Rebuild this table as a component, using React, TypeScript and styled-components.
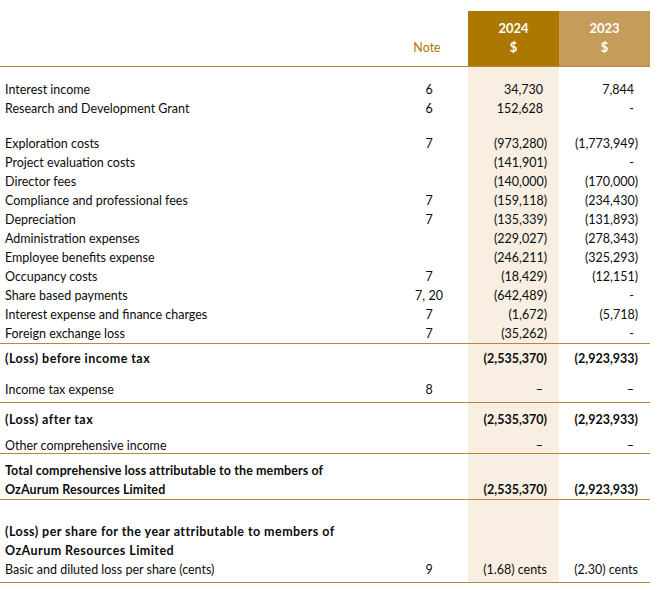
import React from "react";
import styled, { createGlobalStyle, css } from "styled-components";

const GOLD_DARK = "#AD7800";
const GOLD_LIGHT = "#C69C5B";
const RULE = "#B48A33";
const BEIGE = "#F8EEE1";
const INK = "#0c0c0c";

const Global = createGlobalStyle`
  html, body { margin: 0; padding: 0; background: #fff; }
  body {
    font-family: Lato, "Open Sans", "Liberation Sans", sans-serif;
    color: ${INK};
  }
`;

const Page = styled.div`
  width: 650px;
  padding-top: 11px;
  font-size: 12.5px;
`;

const columns = css`
  display: grid;
  grid-template-columns: 390px 78px 91px 91px;
`;

const HeaderRow = styled.div`
  ${columns};
  border-bottom: 1px solid ${RULE};
`;

const NoteHead = styled.div`
  align-self: end;
  text-align: center;
  color: ${GOLD_DARK};
  line-height: 19px;
  padding: 0 0 9px 0;
  margin-left: -4px;
`;

const YearHead = styled.div<{ $tone: "dark" | "light" }>`
  background: ${(p) => (p.$tone === "dark" ? GOLD_DARK : GOLD_LIGHT)};
  color: #fff;
  font-weight: 700;
  text-align: center;
  line-height: 19px;
  padding: 8px 0 9px;
  font-size: 13px;
`;

const Row = styled.div<{ $pt?: number; $pb?: number; $lh?: number; $rule?: boolean; $bold?: boolean }>`
  ${columns};
  line-height: ${(p) => p.$lh ?? 19}px;
  font-weight: ${(p) => (p.$bold ? 700 : 400)};
  border-bottom: ${(p) => (p.$rule ? `1px solid ${RULE}` : "none")};
  & > * {
    padding-top: ${(p) => p.$pt ?? 0}px;
    padding-bottom: ${(p) => p.$pb ?? 0}px;
  }
`;

const Spacer = styled.div<{ $h: number }>`
  ${columns};
  height: ${(p) => p.$h}px;
`;

const Label = styled.div<{ $spacing?: number }>`
  padding-left: 5px;
  white-space: nowrap;
  letter-spacing: ${(p) => p.$spacing ?? 0}px;
`;

const Note = styled.div`
  text-align: center;
`;

const Amount = styled.div<{ $current?: boolean }>`
  background: ${(p) => (p.$current ? BEIGE : "transparent")};
  display: flex;
  align-items: flex-end;
  justify-content: flex-end;
  padding-right: 12px;
  white-space: nowrap;
`;

const Val = styled.span<{ $pad?: boolean }>`
  padding-right: ${(p) => (p.$pad ? 4 : 0)}px;
`;

type Line = {
  label: React.ReactNode;
  note?: string;
  cur?: string;
  prev?: string;
};

const fmt = (v?: string) => {
  if (v === undefined) return null;
  const pad = !v.startsWith("(");
  return <Val $pad={pad}>{v}</Val>;
};

const Cells = ({ label, note, cur, prev, spacing }: Line & { spacing?: number }) => (
  <>
    <Label $spacing={spacing}>{label}</Label>
    <Note>{note}</Note>
    <Amount $current>{fmt(cur)}</Amount>
    <Amount>{fmt(prev)}</Amount>
  </>
);

const Gap = ({ h }: { h: number }) => (
  <Spacer $h={h}>
    <span />
    <span />
    <Amount $current />
    <span />
  </Spacer>
);

const income: Line[] = [
  { label: "Interest income", note: "6", cur: "34,730", prev: "7,844" },
  { label: "Research and Development Grant", note: "6", cur: "152,628", prev: "-" },
];

const expenses: Line[] = [
  { label: "Exploration costs", note: "7", cur: "(973,280)", prev: "(1,773,949)" },
  { label: "Project evaluation costs", cur: "(141,901)", prev: "-" },
  { label: "Director fees", cur: "(140,000)", prev: "(170,000)" },
  { label: "Compliance and professional fees", note: "7", cur: "(159,118)", prev: "(234,430)" },
  { label: "Depreciation", note: "7", cur: "(135,339)", prev: "(131,893)" },
  { label: "Administration expenses", cur: "(229,027)", prev: "(278,343)" },
  { label: "Employee benefits expense", cur: "(246,211)", prev: "(325,293)" },
  { label: "Occupancy costs", note: "7", cur: "(18,429)", prev: "(12,151)" },
  { label: "Share based payments", note: "7, 20", cur: "(642,489)", prev: "-" },
  { label: "Interest expense and finance charges", note: "7", cur: "(1,672)", prev: "(5,718)" },
  { label: "Foreign exchange loss", note: "7", cur: "(35,262)", prev: "-" },
];

const BOLD_SPACING = 0.45;

export default function App() {
  return (
    <>
      <Global />
      <Page>
        <HeaderRow>
          <div />
          <NoteHead>Note</NoteHead>
          <YearHead $tone="dark">
            2024
            <br />$
          </YearHead>
          <YearHead $tone="light">
            2023
            <br />$
          </YearHead>
        </HeaderRow>

        <Gap h={13} />
        {income.map((l) => (
          <Row key={l.label as string}>
            <Cells {...l} />
          </Row>
        ))}
        <Gap h={16} />
        {expenses.map((l, i) => (
          <Row key={l.label as string} $rule={i === expenses.length - 1}>
            <Cells {...l} />
          </Row>
        ))}

        <Row $bold $pt={5} $pb={5}>
          <Cells spacing={BOLD_SPACING} label="(Loss) before income tax" cur="(2,535,370)" prev="(2,923,933)" />
        </Row>
        <Row $pt={7} $pb={3} $rule>
          <Cells label="Income tax expense" note="8" cur="–" prev="–" />
        </Row>

        <Row $bold $pt={7}>
          <Cells spacing={BOLD_SPACING} label="(Loss) after tax" cur="(2,535,370)" prev="(2,923,933)" />
        </Row>
        <Row $pt={10} $lh={14} $rule>
          <Cells label="Other comprehensive income" cur="–" prev="–" />
        </Row>

        <Row $bold $pt={7} $rule>
          <Cells
            spacing={0.1}
            label={
              <>
                Total comprehensive loss attributable to the members of
                <br />
                OzAurum Resources Limited
              </>
            }
            cur="(2,535,370)"
            prev="(2,923,933)"
          />
        </Row>

        <Gap h={22} />
        <Row $bold>
          <Cells
            spacing={BOLD_SPACING}
            label={
              <>
                (Loss) per share for the year attributable to members of
                <br />
                OzAurum Resources Limited
              </>
            }
          />
        </Row>
        <Row $pb={3} $rule>
          <Cells label="Basic and diluted loss per share (cents)" note="9" cur="(1.68) cents" prev="(2.30) cents" />
        </Row>
      </Page>
    </>
  );
}
